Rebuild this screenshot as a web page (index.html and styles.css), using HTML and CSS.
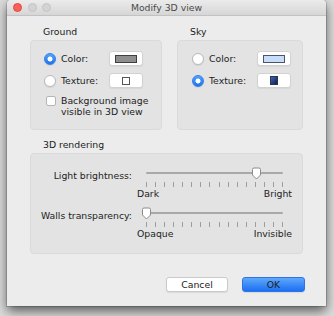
FILE: index.html
```html
<!DOCTYPE html>
<html lang="en">

<head>
    <meta charset="UTF-8">
    <title>Modify 3D view</title>
    <link rel="stylesheet" href="styles.css">
</head>

<body>
    <div class="window">
        <div class="titlebar">
            <div class="lights">
                <span class="light close"></span>
                <span class="light"></span>
                <span class="light"></span>
            </div>
            <div class="title">Modify 3D view</div>
            <div></div>
        </div>

        <div class="content">
            <div class="top-row">
                <section class="group ground">
                    <div class="group-title">Ground</div>
                    <div class="panel">
                        <div class="option-row">
                            <label class="opt"><span class="radio checked"></span>Color:</label>
                            <button class="swatch-btn"><span class="swatch grey"></span></button>
                        </div>
                        <div class="option-row">
                            <label class="opt"><span class="radio"></span>Texture:</label>
                            <button class="swatch-btn"><span class="swatch blank"></span></button>
                        </div>
                        <div class="check-row">
                            <span class="checkbox"></span>
                            <span>Background image<br>visible in 3D view</span>
                        </div>
                    </div>
                </section>

                <section class="group sky">
                    <div class="group-title">Sky</div>
                    <div class="panel">
                        <div class="option-row">
                            <label class="opt"><span class="radio"></span>Color:</label>
                            <button class="swatch-btn"><span class="swatch light-blue"></span></button>
                        </div>
                        <div class="option-row">
                            <label class="opt"><span class="radio checked"></span>Texture:</label>
                            <button class="swatch-btn"><span class="swatch sky-tex"></span></button>
                        </div>
                    </div>
                </section>
            </div>

            <section class="group rendering">
                <div class="group-title">3D rendering</div>
                <div class="panel">
                    <div class="slider-row">
                        <div class="slider-label">Light brightness:</div>
                        <div class="slider">
                            <div class="track-area">
                                <div class="track">
                                    <svg class="thumb" style="left: 81%" width="11" height="13" viewBox="0 0 11 13">
                                        <path d="M1.5 2.5a1.5 1.5 0 0 1 1.5-1.5h5a1.5 1.5 0 0 1 1.5 1.5v5.5l-4 4l-4-4z" fill="#fff" stroke="#8c8c8c" stroke-width="1"/>
                                    </svg>
                                </div>
                            </div>
                            <div class="ticks">
                                <i></i><i></i><i></i><i></i><i></i><i></i><i></i><i></i>
                                <i></i><i></i><i></i><i></i><i></i><i></i><i></i><i></i>
                            </div>
                            <div class="ends"><span>Dark</span><span>Bright</span></div>
                        </div>
                    </div>
                    <div class="slider-row">
                        <div class="slider-label">Walls transparency:</div>
                        <div class="slider">
                            <div class="track-area">
                                <div class="track">
                                    <svg class="thumb" style="left: 0%" width="11" height="13" viewBox="0 0 11 13">
                                        <path d="M1.5 2.5a1.5 1.5 0 0 1 1.5-1.5h5a1.5 1.5 0 0 1 1.5 1.5v5.5l-4 4l-4-4z" fill="#fff" stroke="#8c8c8c" stroke-width="1"/>
                                    </svg>
                                </div>
                            </div>
                            <div class="ticks">
                                <i></i><i></i><i></i><i></i><i></i><i></i><i></i><i></i>
                                <i></i><i></i><i></i><i></i><i></i><i></i><i></i><i></i>
                            </div>
                            <div class="ends"><span>Opaque</span><span>Invisible</span></div>
                        </div>
                    </div>
                </div>
            </section>

            <div class="footer">
                <button class="btn">Cancel</button>
                <button class="btn primary">OK</button>
            </div>
        </div>
    </div>
</body>

</html>
```

FILE: styles.css
```css
  * {
      margin: 0;
      padding: 0;
      box-sizing: border-box;
  }

  body {
      width: 334px;
      height: 316px;
      overflow: hidden;
      background: #dcdcdc;
      font-family: 'DejaVu Sans', sans-serif;
      font-size: 9.3px;
      line-height: 10px;
      color: #222;
  }

.window {
      width: 319px;
      height: 306px;
      margin-left: 7px;
      background: #ececec;
      border-radius: 4px 4px 0 0;
      box-shadow: 0 5px 12px rgba(0, 0, 0, 0.6), 0 0 0 1px rgba(0, 0, 0, 0.15);
      overflow: hidden;
  }

.titlebar {
      height: 16px;
      display: grid;
      grid-template-columns: 1fr auto 1fr;
      align-items: center;
      background: linear-gradient(to bottom, #ebebeb, #d6d6d6);
      border-bottom: 1px solid #c2c2c2;
  }

.lights {
      display: flex;
      gap: 5.7px;
      padding-left: 6px;
  }

.light {
      width: 9px;
      height: 9px;
      border-radius: 50%;
      background: #d3d3d3;
      border: 1px solid #c4c4c4;
  }

.light.close {
      background: #fc5f57;
      border-color: #e2463f;
  }

.title {
      color: #4a4a4a;
  }

.content {
      padding: 10px 23px 0 23px;
  }

.top-row {
      display: flex;
      gap: 15px;
  }

.group-title {
      padding-left: 13px;
      line-height: 12px;
      margin-bottom: 2px;
  }

.panel {
      background: #e3e3e3;
      border: 1px solid #dadada;
      border-radius: 4px;
  }

.ground .panel {
      width: 132px;
      height: 90px;
      padding: 10px 0 0 13px;
  }

.sky .panel {
      width: 126px;
      height: 90px;
      padding: 10px 0 0 14px;
  }

.option-row {
      display: flex;
      align-items: center;
      height: 15px;
      margin-bottom: 7px;
  }

.opt {
      width: 65px;
      display: flex;
      align-items: center;
      gap: 5px;
  }

.radio {
      width: 12px;
      height: 12px;
      border-radius: 50%;
      background: #fff;
      border: 1px solid #b9b9b9;
      box-shadow: 0 1px 1px rgba(0, 0, 0, 0.08);
  }

.radio.checked {
      border-color: #2f7fea;
      background: radial-gradient(circle, #fff 0, #fff 2.2px, transparent 2.8px), linear-gradient(to bottom, #56a3fb, #1f72f0);
  }

.swatch-btn {
      width: 34px;
      height: 15px;
      background: #fff;
      border: 1px solid #d2d2d2;
      border-radius: 3px;
      display: flex;
      align-items: center;
      justify-content: center;
      box-shadow: 0 1px 1px rgba(0, 0, 0, 0.06);
  }

.swatch {
      display: block;
  }

.swatch.grey {
      width: 22px;
      height: 8px;
      background: #8e8e8e;
      border: 1px solid #3f3f3f;
  }

.swatch.blank {
      width: 8px;
      height: 8px;
      background: #fff;
      border: 1px solid #555;
  }

.swatch.light-blue {
      width: 22px;
      height: 8px;
      background: #c6dcf9;
      border: 1px solid #4b5568;
  }

.swatch.sky-tex {
      width: 8px;
      height: 9px;
      background: linear-gradient(to bottom right, #4166b5, #0c1d4f);
      border: 1px solid #2a3550;
  }

.check-row {
      display: flex;
      align-items: flex-start;
      gap: 5px;
      margin-top: 6px;
      padding-left: 2px;
      line-height: 11px;
  }

.checkbox {
      width: 10px;
      height: 10px;
      margin-top: 1px;
      background: #fff;
      border: 1px solid #b5b5b5;
      border-radius: 2px;
  }

.rendering .group-title {
      margin-top: 9px;
  }

.rendering .panel {
      height: 101px;
      padding-top: 12px;
      display: flex;
      flex-direction: column;
      gap: 7px;
  }

.slider-row {
      display: grid;
      grid-template-columns: 101px 155px;
      gap: 5px;
  }

.slider-label {
      text-align: right;
      padding-top: 5px;
  }

.track-area {
      height: 14px;
      padding: 6px 9px 0 9px;
  }

.track {
      position: relative;
      height: 2px;
      background: #a9a9a9;
      border-radius: 1px;
  }

.thumb {
      position: absolute;
      top: -5px;
      margin-left: -5.5px;
  }

.ticks {
      display: flex;
      justify-content: space-between;
      padding: 0 9px;
      margin-top: 2px;
      height: 5px;
  }

.ticks i {
      width: 1px;
      background: #9d9d9d;
  }

.ends {
      display: flex;
      justify-content: space-between;
      margin-top: 2px;
  }

.footer {
      display: flex;
      justify-content: flex-end;
      gap: 14px;
      margin-top: 23px;
      margin-right: -2px;
  }

.btn {
      width: 62px;
      height: 15px;
      font-family: inherit;
      font-size: 9.3px;
      color: #222;
      background: #fff;
      border: 1px solid #cacaca;
      border-radius: 3px;
      box-shadow: 0 1px 1px rgba(0, 0, 0, 0.08);
  }

.btn.primary {
      width: 63px;
      background: linear-gradient(to bottom, #5ea8fc, #1b6ff3);
      border-color: #2d74e6;
  }
```
